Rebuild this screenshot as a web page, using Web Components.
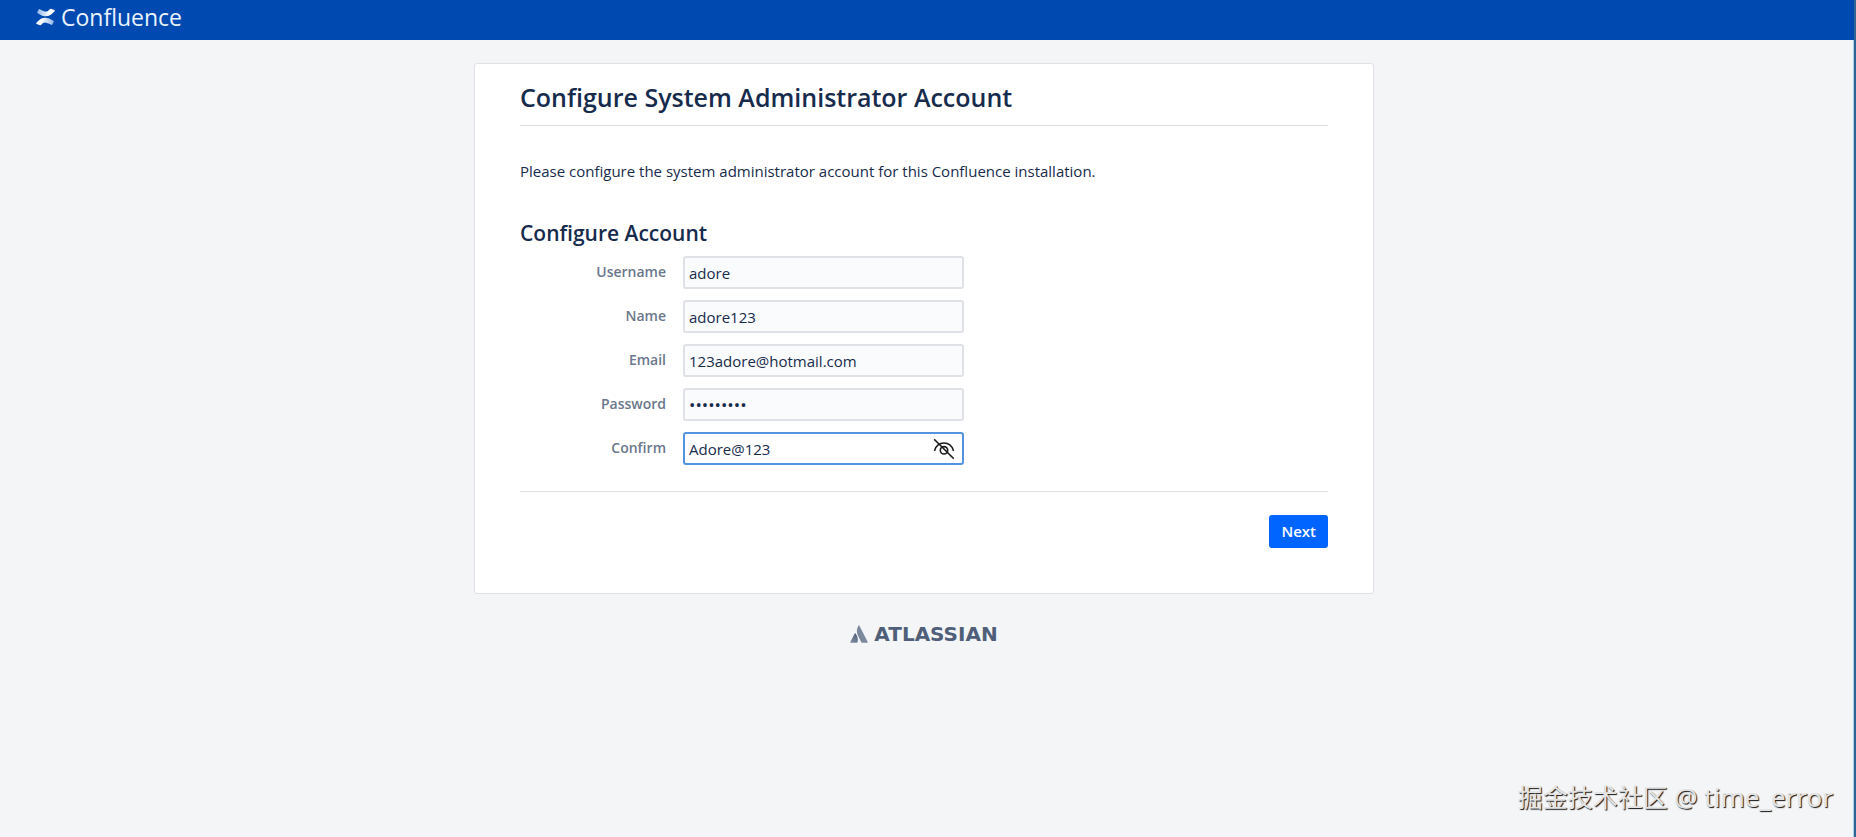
<!DOCTYPE html>
<html lang="en">
<head>
<meta charset="utf-8">
<title>Configure System Administrator Account - Confluence</title>
<style>
  html, body { height: 100%; }
  body {
    margin: 0;
    background: #f4f5f7;
    color: #172b4d;
    font: 15px/20px "Open Sans", "Noto Sans", sans-serif;
  }
</style>
</head>
<body>
<setup-page>
  <app-header slot="header">Confluence</app-header>
  <setup-card heading="Configure System Administrator Account">
    <p>Please configure the system administrator account for this Confluence installation.</p>
    <form-section heading="Configure Account">
      <form-field label="Username" value="adore"></form-field>
      <form-field label="Name" value="adore123"></form-field>
      <form-field label="Email" value="123adore@hotmail.com" type="email"></form-field>
      <form-field label="Password" value="Adore@123" type="password"></form-field>
      <form-field label="Confirm" value="Adore@123" active></form-field>
    </form-section>
    <primary-button slot="actions">Next</primary-button>
  </setup-card>
  <atlassian-logo slot="footer"></atlassian-logo>
  <page-watermark slot="overlay">掘金技术社区 <span>@ time_error</span></page-watermark>
</setup-page>

<script>
const define = (name, html, setup) => {
  const template = document.createElement('template');
  template.innerHTML = html;
  customElements.define(name, class extends HTMLElement {
    constructor() {
      super();
      this.attachShadow({ mode: 'open' }).append(template.content.cloneNode(true));
    }
    connectedCallback() {
      if (setup) setup(this, this.shadowRoot);
    }
  });
};

define('setup-page', `
  <style>
    :host { display: flex; flex-direction: column; min-height: 100%; box-sizing: border-box; position: relative; overflow: hidden; border-right: 2px solid #2f6594; }
    :host::after { content: ""; position: absolute; top: 40px; right: 0; bottom: 0; width: 1px; background: #a9cfe8; }
    main { display: flex; flex-direction: column; align-items: center; gap: 28px; padding: 23px 30px 40px 24px; }
  </style>
  <slot name="header"></slot>
  <main><slot></slot><slot name="footer"></slot></main>
  <slot name="overlay"></slot>
`);

define('app-header', `
  <style>
    :host { display: block; background: #0049b0; }
    header { display: flex; align-items: center; height: 40px; padding: 0 36px; box-sizing: border-box; }
    a { display: flex; align-items: center; gap: 6px; margin-bottom: 6px; color: #e9f4ff; text-decoration: none; font-size: 23px; line-height: 32px; }
    svg { display: block; width: 19px; height: 18px; }
  </style>
  <header>
    <a href="#">
      <svg viewBox="0 0 18 18" preserveAspectRatio="none" aria-hidden="true">
        <defs>
          <linearGradient id="top" x1="0" x2="1"><stop offset="0" stop-color="#8fb6e8"/><stop offset=".7" stop-color="#fff"/></linearGradient>
          <linearGradient id="bottom" x1="0" x2="1"><stop offset=".3" stop-color="#fff"/><stop offset="1" stop-color="#8fb6e8"/></linearGradient>
        </defs>
        <path fill="url(#top)" d="M3.600 1.200Q2.900.9 2.500 1.600L1.200 4.300Q1 5 1.600 5.300Q5.600 8.300 9 8.300C12.600 8.300 14.900 6.500 17.800 3Q18 2.300 17.400 2L14 .8Q13.400.6 13 1.200C10.300 4.800 8.500 3.700 3.600 1.200Z"/>
        <path fill="url(#bottom)" d="M14.400 16.800Q15.100 17.100 15.500 16.400L16.800 13.700Q17 13 16.400 12.700Q12.400 9.700 9 9.700C5.400 9.700 3.100 11.500.2 15Q0 15.700.6 16L4 17.200Q4.600 17.400 5 16.800C7.700 13.200 9.500 14.300 14.400 16.800Z"/>
      </svg>
      <span><slot></slot></span>
    </a>
  </header>
`);

define('setup-card', `
  <style>
    :host { display: block; width: 100%; max-width: 900px; box-sizing: border-box; background: #fff; border: 1px solid #dfe1e5; border-radius: 3px; padding: 15px 45px 45px; }
    h1 { margin: 0 0 35px; padding-bottom: 10px; border-bottom: 1px solid #dadce0; font-size: 25px; line-height: 36px; font-weight: 600; }
    ::slotted(p) { margin: 0 0 36px; }
    footer { display: flex; justify-content: flex-end; margin-top: 26px; padding-top: 23px; border-top: 1px solid #dfe1e5; }
  </style>
  <h1></h1>
  <slot></slot>
  <footer><slot name="actions"></slot></footer>
`, (el, root) => { root.querySelector('h1').textContent = el.getAttribute('heading'); });

define('form-section', `
  <style>
    :host { display: block; }
    h2 { margin: 0 0 7px; font-size: 21px; line-height: 32px; font-weight: 600; }
    div { display: flex; flex-direction: column; gap: 11px; }
  </style>
  <h2></h2>
  <div><slot></slot></div>
`, (el, root) => { root.querySelector('h2').textContent = el.getAttribute('heading'); });

define('form-field', `
  <style>
    :host { display: grid; grid-template-columns: 146px minmax(0, 281px); column-gap: 17px; }
    label { padding-top: 6px; text-align: right; font-size: 14px; font-weight: 600; color: #6b778c; }
    .box { display: flex; align-items: center; height: 33px; box-sizing: border-box; border: 2px solid #dfe1e6; border-radius: 3px; background: #fafbfc; }
    input { flex: 1; min-width: 0; padding: 0 5px 0 4px; border: 0; outline: 0; background: none; color: inherit; font: inherit; }
    input[type="password"] { font-size: 17px; }
    button { display: none; padding: 0; margin-right: 7px; border: 0; background: none; color: #1b1b1b; }
    svg { display: block; width: 22px; height: 22px; }
    :host([active]) .box { border-color: #5493e2; background: #fff; }
    :host([active]) button { display: block; }
  </style>
  <label for="control"></label>
  <div class="box">
    <input id="control">
    <button type="button" aria-label="Hide password">
      <svg viewBox="0 0 22 22" fill="none" stroke="currentColor" stroke-width="1.600" stroke-linecap="round">
        <path d="M1.700 12.300C3.200 7.500 6.800 5 11 5S18.800 7.500 20.300 12.300"/>
        <circle cx="11" cy="12.300" r="3.700"/>
        <path d="M1.700 1.700L20.300 20.300"/>
      </svg>
    </button>
  </div>
`, (el, root) => {
  const input = root.querySelector('input');
  root.querySelector('label').textContent = el.getAttribute('label');
  input.type = el.getAttribute('type') || 'text';
  input.value = el.getAttribute('value');
});

define('primary-button', `
  <style>
    :host { display: block; }
    button { display: block; height: 33px; padding: 0 12px 2px; border: 0; border-radius: 3px; background: #0065ff; color: #fff; font: inherit; font-weight: 600; }
  </style>
  <button type="button"><slot></slot></button>
`);

define('atlassian-logo', `
  <style>
    :host { display: block; }
    a { display: flex; align-items: center; gap: 6px; color: #505f79; text-decoration: none; font: bold 20px/24px "DejaVu Sans", sans-serif; }
    svg { display: block; width: 18px; height: 18px; }
  </style>
  <a href="#">
    <svg viewBox="0 0 18 18" aria-hidden="true">
      <defs><linearGradient id="fold" x1=".8" y1="0" x2=".3" y2="1"><stop offset="0" stop-color="#505f79"/><stop offset="1" stop-color="#7c889c"/></linearGradient></defs>
      <path fill="url(#fold)" d="M5.400 8.200Q5 7.700 4.700 8.400L.3 17.100Q.1 17.700.7 17.700H6.900Q7.300 17.700 7.500 17.300C8.500 14.800 7.700 11 5.400 8.200Z"/>
      <path fill="#7c889c" d="M8.600.5C6.400 4.100 6.400 7.600 8.100 10.900L11.300 17.300Q11.500 17.700 11.900 17.700H17.300Q17.900 17.700 17.700 17.100L9.300.5Q8.900-.1 8.600.5Z"/>
    </svg>
    <span>ATLASSIAN</span>
  </a>
`);

define('page-watermark', `
  <style>
    :host { position: absolute; right: 21px; bottom: 22px; color: #e4e4e4; text-shadow: 1px 1px 1px #111; font: 25px/36px "Noto Sans", "Noto Sans CJK SC", sans-serif; white-space: nowrap; }
    ::slotted(span) { font-size: 26px; }
  </style>
  <slot></slot>
`);
</script>
</body>
</html>
